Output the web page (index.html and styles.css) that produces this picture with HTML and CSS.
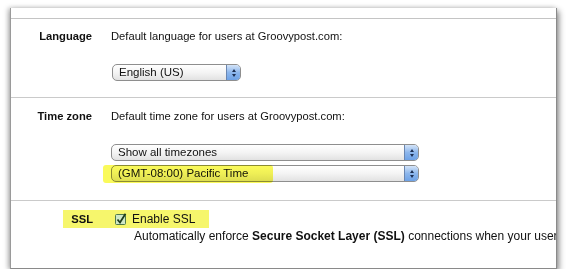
FILE: index.html
```html
<!DOCTYPE html>
<html lang="en">
<head>
    <meta charset="UTF-8">
    <title>Groovypost settings</title>
    <link rel="stylesheet" href="styles.css">
</head>
<body>
    <div class="window">
        <div class="top"></div>

        <div class="section lang">
            <div class="label">Language</div>
            <div class="field">
                <p class="hint">Default language for users at Groovypost.com:</p>
                <div class="select small">
                    <span>English (US)</span>
                    <span class="arrows"><i class="up"></i><i class="down"></i></span>
                </div>
            </div>
        </div>

        <div class="section tz">
            <div class="label">Time zone</div>
            <div class="field">
                <p class="hint">Default time zone for users at Groovypost.com:</p>
                <div class="select wide">
                    <span>Show all timezones</span>
                    <span class="arrows"><i class="up"></i><i class="down"></i></span>
                </div>
                <div class="select wide marked">
                    <span>(GMT-08:00) Pacific Time</span>
                    <span class="arrows"><i class="up"></i><i class="down"></i></span>
                </div>
            </div>
        </div>

        <div class="section ssl">
            <div class="ssl-row">
                <div class="label">SSL</div>
                <svg class="check" width="12" height="12" viewBox="0 0 12 12">
                    <rect x="0.5" y="1.5" width="10" height="10" rx="1" fill="#cfe8c6" stroke="#4f7a4a"/>
                    <path d="M2.5 6.5 L5 9.5 L10.5 0.8" fill="none" stroke="#1f3d1c" stroke-width="1.8"/>
                </svg>
                <span class="enable">Enable SSL</span>
            </div>
            <p class="desc">Automatically enforce <b>Secure Socket Layer (SSL)</b> connections when your users sign in</p>
        </div>
    </div>
</body>
</html>
```

FILE: styles.css
```css
body {
    margin: 0;
    background: #fff;
    font-family: "Liberation Sans", Arial, sans-serif;
    font-size: 11.2px;
    color: #111;
    overflow: hidden;
}

.window {
    margin: 8px 11px 0 10px;
    height: 260px;
    background: #fff;
    border-left: 1px solid #9a9a9a;
    border-right: 1px solid #8a8a8a;
    border-bottom: 1px solid #8a8a8a;
    box-shadow: 2px 3px 6px rgba(0,0,0,0.45), -2px 0 5px rgba(0,0,0,0.25);
    overflow: hidden;
}

.top {
    height: 10px;
    border-bottom: 1px solid #c4c4c4;
}

.section {
    display: flex;
    border-bottom: 1px solid #cacaca;
}

.label {
    width: 81px;
    text-align: right;
    font-weight: bold;
    line-height: 16px;
    flex-shrink: 0;
}

.field {
    margin-left: 19px;
}

.hint {
    margin: 0;
    line-height: 16px;
}

.lang {
    padding-top: 9px;
    height: 69px;
}

.lang .select {
    margin-top: 20px;
    margin-left: 1px;
}

.tz {
    padding-top: 10px;
    height: 92px;
}

.tz .select {
    margin-top: 20px;
}

.tz .select + .select {
    margin-top: 4px;
}

.select {
    position: relative;
    display: flex;
    align-items: center;
    height: 15px;
    border: 1px solid #8e8e8e;
    border-radius: 5px;
    background: linear-gradient(#ffffff, #f4f4f4 50%, #e2e2e2);
    font-family: "Liberation Sans", Arial, sans-serif;
    font-size: 11.5px;
    color: #111;
}

.select span:first-child {
    flex: 1;
    padding-left: 6px;
    line-height: 15px;
}

.small {
    width: 127px;
}

.wide {
    width: 306px;
}

.arrows {
    width: 13px;
    height: 15px;
    border-left: 1px solid #6a86b0;
    border-radius: 0 4px 4px 0;
    background: linear-gradient(#d4e4f8, #8cb6ec 50%, #6ea2e6);
    display: flex;
    flex-direction: column;
    align-items: center;
    justify-content: center;
    gap: 2px;
}

.arrows i {
    width: 0;
    height: 0;
    border-left: 2.5px solid transparent;
    border-right: 2.5px solid transparent;
}

.arrows .up {
    border-bottom: 3px solid #1c2f52;
}

.arrows .down {
    border-top: 3px solid #1c2f52;
}

.marked::before {
    content: "";
    position: absolute;
    left: -9px;
    top: -1px;
    width: 170px;
    height: 18px;
    border-radius: 3px;
    background: #fafa5a;
    mix-blend-mode: multiply;
}

.ssl {
    flex-direction: column;
    padding-top: 9px;
    border-bottom: none;
}

.ssl-row {
    display: flex;
    align-items: center;
    margin-left: 52px;
    width: 146px;
    height: 18px;
    background: #f6f66c;
}

.ssl .label {
    width: 30px;
}

.check {
    margin-left: 22px;
}

.enable {
    margin-left: 5px;
    font-size: 12px;
}

.desc {
    margin: 0 0 0 123px;
    line-height: 16px;
    font-size: 12px;
    white-space: nowrap;
}
```
